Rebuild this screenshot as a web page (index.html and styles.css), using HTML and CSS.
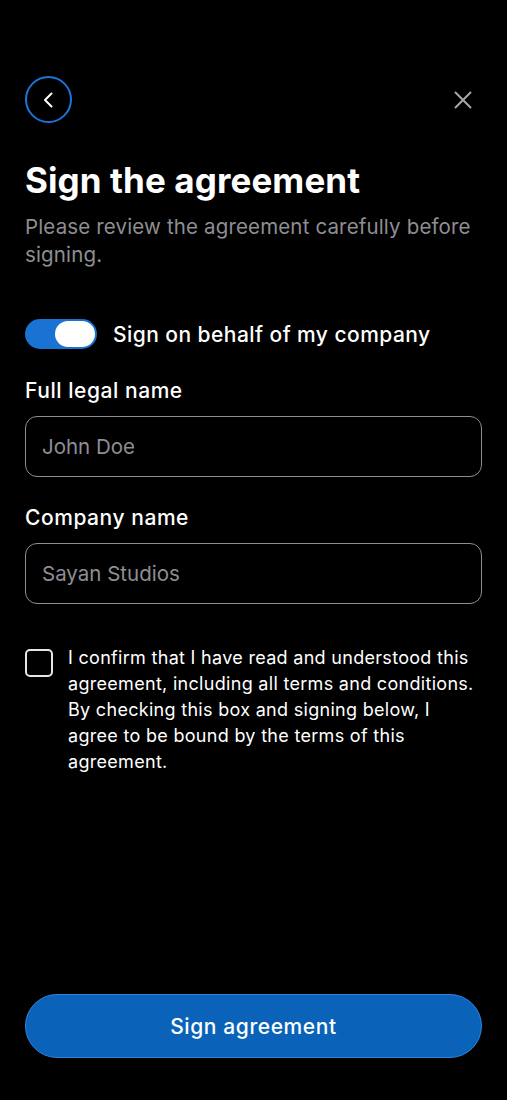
FILE: index.html
```html
<!DOCTYPE html>
<html lang="en">
<head>
  <meta charset="UTF-8">
  <title>Sign the agreement</title>
  <meta name="viewport" content="width=device-width, initial-scale=1.0">
  <link rel="stylesheet" href="styles.css">
</head>
<body>
  <div class="screen">
    <div class="topbar">
      <button class="back" aria-label="Back">
        <svg width="16" height="18" viewBox="0 0 16 18"><path d="M10.5 2.5 L4 9 L10.5 15.5" fill="none" stroke="#fff" stroke-width="2" stroke-linecap="round" stroke-linejoin="round"/></svg>
      </button>
      <button class="close" aria-label="Close">
        <svg width="18" height="18" viewBox="0 0 18 18"><path d="M1.5 1.5 L16.5 16.5 M16.5 1.5 L1.5 16.5" fill="none" stroke="#a6a6aa" stroke-width="2" stroke-linecap="round"/></svg>
      </button>
    </div>

    <h1 class="title">Sign the agreement</h1>
    <p class="subtitle">Please review the agreement carefully before signing.</p>

    <label class="toggle-row">
      <span class="toggle"><span class="knob"></span></span>
      <span class="toggle-label">Sign on behalf of my company</span>
    </label>

    <div class="field">
      <label class="field-label" for="fullName">Full legal name</label>
      <input id="fullName" class="field-input" type="text" placeholder="John Doe">
    </div>

    <div class="field">
      <label class="field-label" for="company">Company name</label>
      <input id="company" class="field-input" type="text" placeholder="Sayan Studios">
    </div>

    <label class="confirm">
      <span class="checkbox"></span>
      <span class="confirm-text">I confirm that I have read and understood this agreement, including all terms and conditions. By checking this box and signing below, I agree to be bound by the terms of this agreement.</span>
    </label>

    <div class="spacer"></div>

    <button class="submit">Sign agreement</button>
  </div>
</body>
</html>
```

FILE: styles.css
```css
*{box-sizing:border-box}
html,body{margin:0;background:#000;color:#fff;font-family:Inter,"Noto Sans",sans-serif}
.screen{display:flex;flex-direction:column;min-height:1100px;padding:76px 25px 42px}

.topbar{display:flex;justify-content:space-between;align-items:center}
.back{width:47px;height:47px;border-radius:50%;border:2px solid #1b74d8;background:transparent;
      display:flex;align-items:center;justify-content:center;padding:0;margin:0}
.close{width:36px;height:36px;background:transparent;border:none;display:flex;align-items:center;
       justify-content:center;padding:0;margin-right:1px}

.title{font-size:35px;font-weight:700;letter-spacing:.1px;margin:36px 0 0;line-height:42px}
.subtitle{font-size:20.5px;line-height:28px;color:#8e8e93;margin:12px 0 0;letter-spacing:.15px}

.toggle-row{display:flex;align-items:center;gap:16px;margin-top:50px}
.toggle{width:72px;height:30px;border-radius:15px;background:#1a72d2;display:flex;
        justify-content:flex-end;align-items:center;padding:2px}
.knob{width:40px;height:26px;border-radius:13px;background:#fff}
.toggle-label{font-size:21px;font-weight:500;letter-spacing:.45px}

.field{display:flex;flex-direction:column;margin-top:27px}
.field + .field{margin-top:26px}
.field-label{font-size:21px;font-weight:500;line-height:30px;letter-spacing:.55px}
.field-input{margin-top:10px;height:61px;border:1.5px solid #8e8e93;border-radius:12px;background:#000;
             color:#fff;font-family:inherit;font-size:20.5px;padding:0 16px;outline:none}
.field-input::placeholder{color:#8e8e93}

.confirm{display:flex;gap:15px;margin-top:45px;align-items:flex-start}
.checkbox{flex:none;width:28px;height:28px;border:2px solid #e6e6e6;border-radius:5px;margin-top:0}
.confirm-text{font-size:18px;line-height:26px;margin-top:-4px;letter-spacing:.3px}

.spacer{flex:1}
.submit{height:64px;border-radius:32px;background:#0a63b9;border:1.5px solid #2d84e0;color:#fff;
        font-family:inherit;font-size:21px;font-weight:500;letter-spacing:.6px;width:100%}
```
